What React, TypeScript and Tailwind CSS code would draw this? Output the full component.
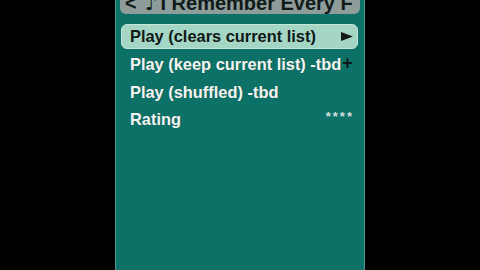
const rows = [
  { label: "Play (keep current list) -tbd", extra: "+" },
  { label: "Play (shuffled) -tbd", extra: "" },
  { label: "Rating", extra: "****" },
];

const App = () => {
  return (
    <div className="w-[480px] h-[270px] bg-black flex justify-center overflow-hidden font-['Liberation_Sans',Arial,sans-serif]">
      <div className="w-[250px] h-full bg-[#0c7267] border-x border-[#4f9a90] flex flex-col">
        {/* header, cut off at the top */}
        <div className="mx-[4px] -mt-[8px] h-[22px] rounded-b-[6px] bg-[#8e9d9a] flex items-center overflow-hidden whitespace-nowrap pl-[5px] text-[20px] leading-[22px] font-bold text-[#101a18]">
          <span className="mr-[8px]">&lt;</span>
          <span className="mr-[3px] font-['DejaVu_Sans',sans-serif]">♪</span>
          <span>I Remember Every F</span>
        </div>

        <div className="mt-[8.5px] flex flex-col">
          <div className="h-[27.5px] py-[1px] pl-[5px] pr-[6px]">
            <div className="h-full rounded-[6px] bg-[#a5d5c5] border border-[#c3e6d9] flex items-center justify-between pl-[8px] pr-[4px]">
              <span className="text-[16.4px] font-bold text-[#0f1a17] leading-none whitespace-nowrap">
                Play (clears current list)
              </span>
              <svg width="12" height="9" viewBox="0 0 12 9">
                <path d="M0 0 L12 4.5 L0 9 Z" fill="#111a18" />
              </svg>
            </div>
          </div>

          {rows.map((r) => (
            <div
              key={r.label}
              className="h-[27.5px] pt-[1.5px] flex items-center pl-[14px] pr-[9px] text-[16.4px] font-bold leading-none whitespace-nowrap"
            >
              <span className="shrink-0 text-[#f1f6f4] [text-shadow:0_0_1px_#2b4a45]">{r.label}</span>
              {r.extra === "+" && (
                <span className="shrink-0 text-[#0e1a17] text-[18px] ml-[1px] -mt-[3px]">+</span>
              )}
              {r.extra === "****" && (
                <span className="ml-auto text-[#d3dedb] text-[13px] tracking-[2px] mr-[1px] -mt-[6px]">****</span>
              )}
            </div>
          ))}
        </div>
      </div>
    </div>
  );
};

export default App;
